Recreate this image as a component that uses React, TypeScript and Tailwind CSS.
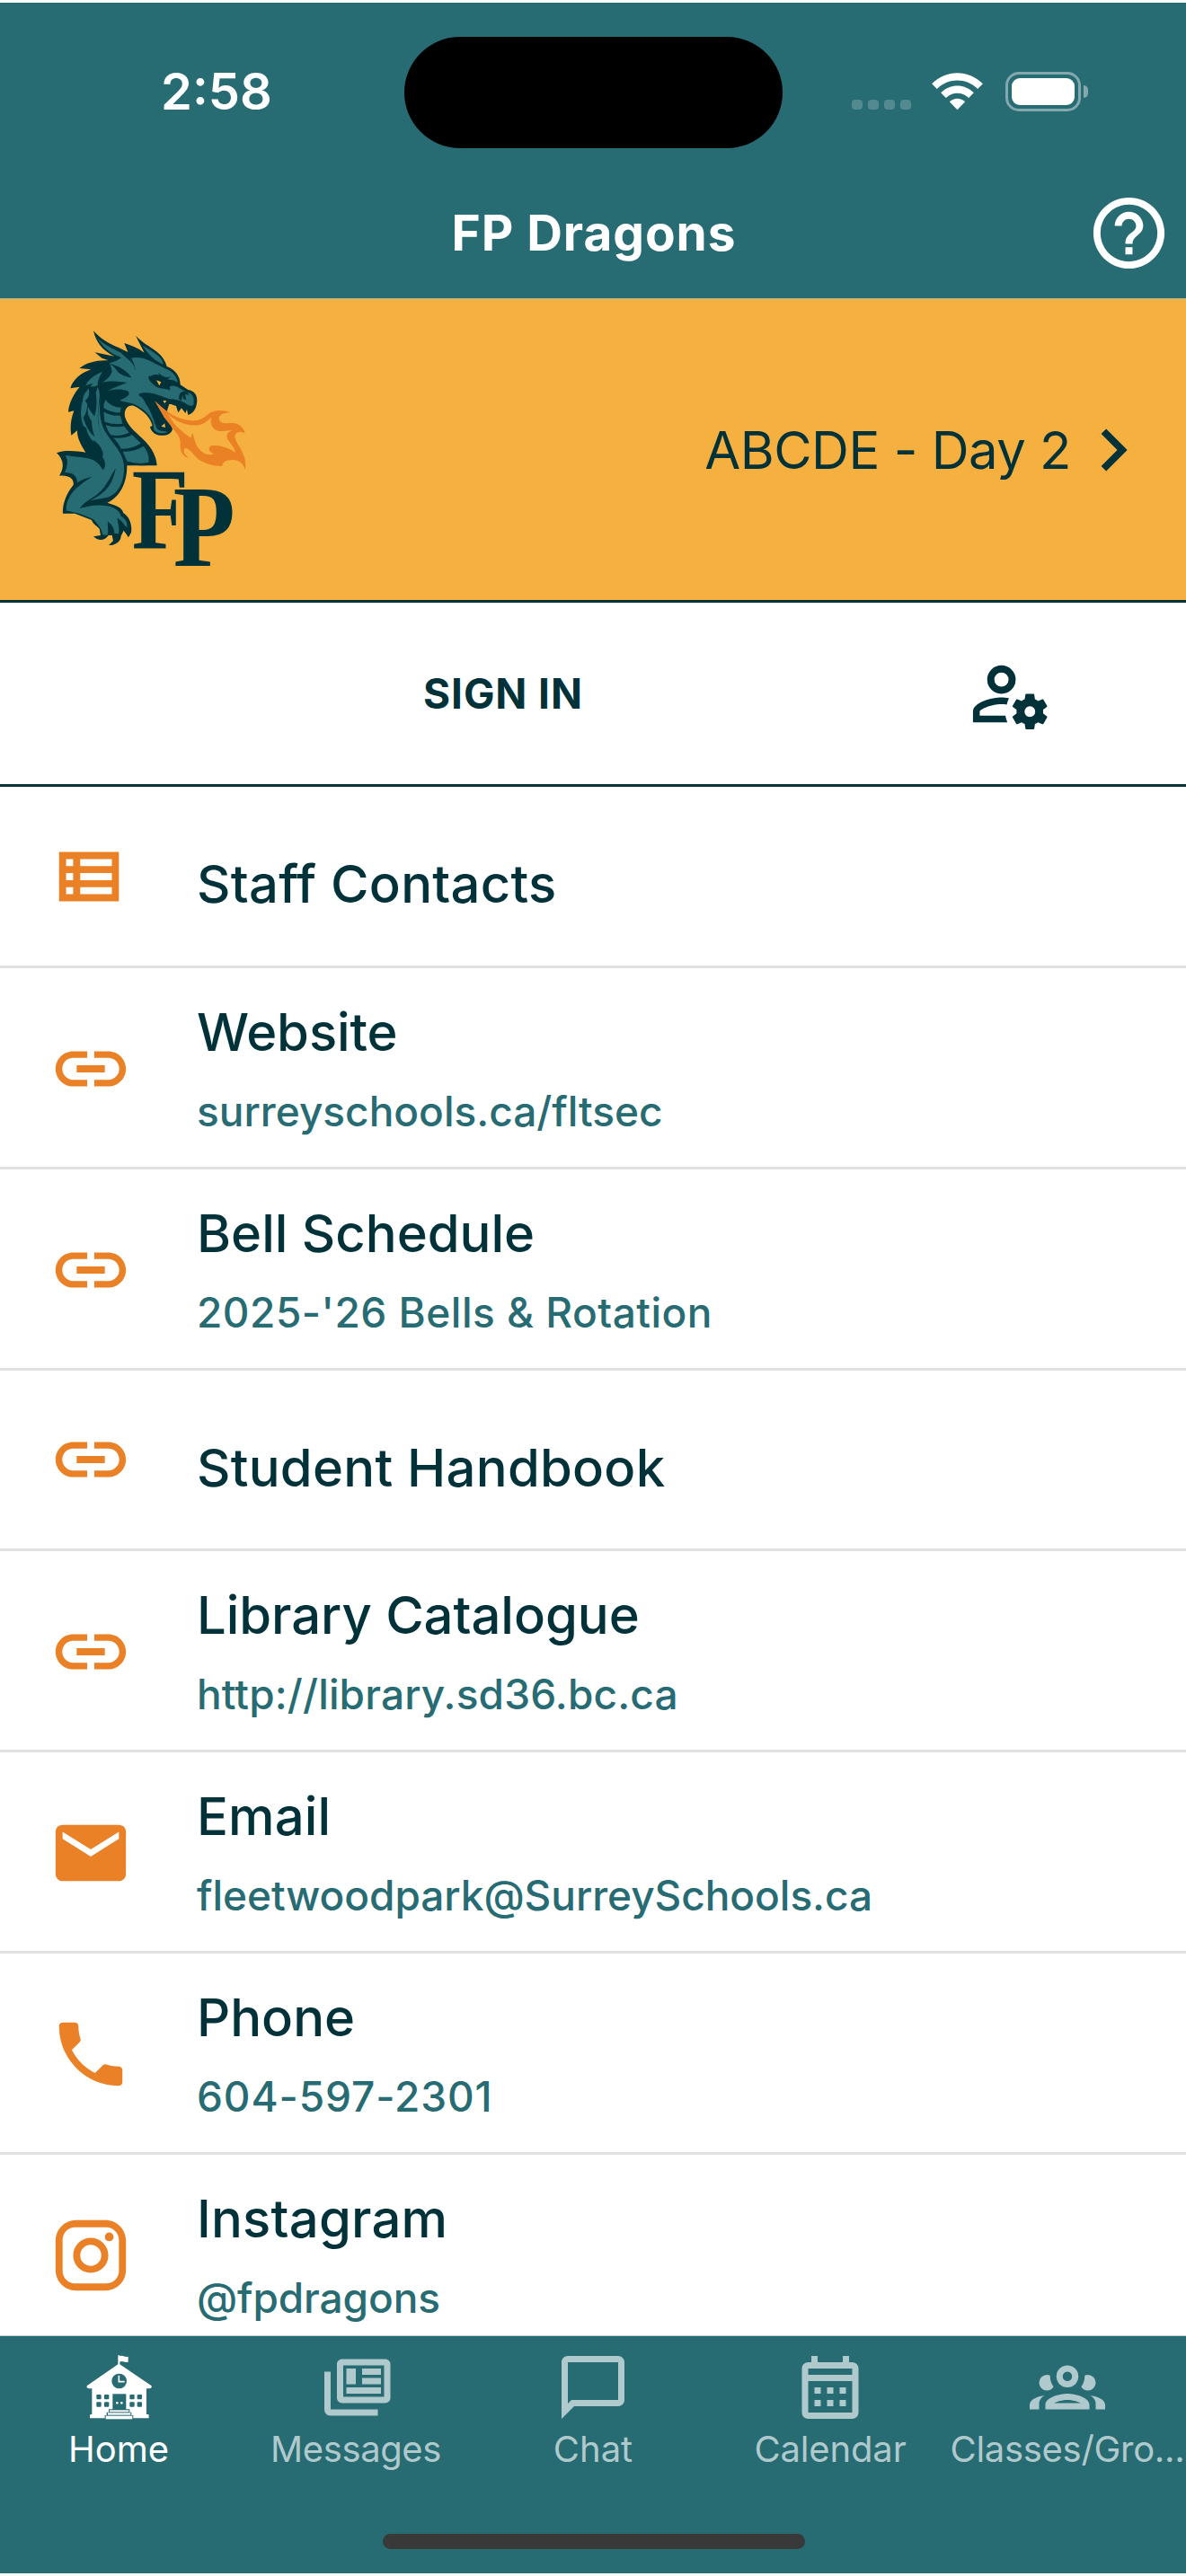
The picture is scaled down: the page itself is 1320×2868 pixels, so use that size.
import type { ReactNode } from "react";
import { MdChevronRight, MdEmail, MdHelpOutline, MdLink, MdPhone } from "react-icons/md";

function Glyph({ d, className }: { d: string; className: string }) {
  return (
    <svg viewBox="0 0 24 24" fill="currentColor" fillRule="evenodd" className={className} aria-hidden>
      <path d={d} />
    </svg>
  );
}

const paths = {
  list: "M3,5v14h17V5H3z M7,7v2H5V7H7z M5,13v-2h2v2H5z M5,15h2v2H5V15z M18,17H9v-2h9V17z M18,13H9v-2h9V13z M18,9H9V7h9V9z",
  instagram:
    "M7.8,2H16.2C19.4,2 22,4.6 22,7.8V16.2A5.8,5.8 0 0,1 16.2,22H7.8C4.6,22 2,19.4 2,16.2V7.8A5.8,5.8 0 0,1 7.8,2M7.6,4A3.6,3.6 0 0,0 4,7.6V16.4C4,18.39 5.61,20 7.6,20H16.4A3.6,3.6 0 0,0 20,16.4V7.6C20,5.61 18.39,4 16.4,4H7.6M17.25,5.5A1.25,1.25 0 0,1 18.5,6.75A1.25,1.25 0 0,1 17.25,8A1.25,1.25 0 0,1 16,6.75A1.25,1.25 0 0,1 17.25,5.5M12,7A5,5 0 0,1 17,12A5,5 0 0,1 12,17A5,5 0 0,1 7,12A5,5 0 0,1 12,7M12,9A3,3 0 0,0 9,12A3,3 0 0,0 12,15A3,3 0 0,0 15,12A3,3 0 0,0 12,9Z",
  accountCog:
    "M10 4A4 4 0 0 0 6 8A4 4 0 0 0 10 12A4 4 0 0 0 14 8A4 4 0 0 0 10 4M10 6A2 2 0 0 1 12 8A2 2 0 0 1 10 10A2 2 0 0 1 8 8A2 2 0 0 1 10 6M17,12C16.87,12 16.76,12.09 16.74,12.21L16.55,13.53C16.25,13.66 15.96,13.82 15.7,14L14.46,13.5C14.35,13.5 14.22,13.5 14.15,13.63L13.15,15.36C13.09,15.47 13.11,15.6 13.21,15.68L14.27,16.5C14.25,16.67 14.24,16.83 14.24,17C14.24,17.17 14.25,17.33 14.27,17.5L13.21,18.32C13.12,18.4 13.09,18.53 13.15,18.64L14.15,20.37C14.21,20.5 14.34,20.5 14.46,20.5L15.7,20C15.96,20.18 16.24,20.35 16.55,20.47L16.74,21.79C16.76,21.91 16.86,22 17,22H19C19.11,22 19.22,21.91 19.24,21.79L19.43,20.47C19.73,20.34 20,20.18 20.27,20L21.5,20.5C21.63,20.5 21.76,20.5 21.83,20.37L22.83,18.64C22.89,18.53 22.86,18.4 22.77,18.32L21.7,17.5C21.72,17.33 21.74,17.17 21.74,17C21.74,16.83 21.73,16.67 21.7,16.5L22.76,15.68C22.85,15.6 22.88,15.47 22.82,15.36L21.82,13.63C21.76,13.5 21.63,13.5 21.5,13.5L20.27,14C20,13.82 19.73,13.65 19.42,13.53L19.23,12.21C19.22,12.09 19.11,12 19,12H17M18,15.5A1.5,1.5 0 0,1 19.5,17A1.5,1.5 0 0,1 18,18.5C17.16,18.5 16.5,17.83 16.5,17A1.5,1.5 0 0,1 18,15.5M10,13C7.33,13 2,14.33 2,17V20H11.67C11.41,19.4 11.23,18.77 11.12,18.1H3.9V17C3.9,16.36 7.03,14.9 10,14.9C10.5,14.9 11,14.95 11.5,15C11.63,14.4 11.84,13.75 12.12,13.2C11.3,13.07 10.6,13 10,13",
  news: "M4 7V19H19V21H4C2 21 2 19 2 19V7H4M21 5V15H8V5H21M21.3 3H7.7C6.76 3 6 3.7 6 4.55V15.45C6 16.31 6.76 17 7.7 17H21.3C22.24 17 23 16.31 23 15.45V4.55C23 3.7 22.24 3 21.3 3M9 6H12V11H9V6M20 14H9V12H20V14M20 8H14V6H20V8M20 11H14V9H20V11Z",
  chat: "M20 2H4C2.9 2 2 2.9 2 4V22L6 18H20C21.1 18 22 17.1 22 16V4C22 2.9 21.1 2 20 2M20 16H5.17L4 17.17V4H20V16Z",
  calendar:
    "M7 12h2v2H7v-2M21 6v14c0 1.1-.9 2-2 2H5c-1.1 0-2-.9-2-2V6c0-1.1.9-2 2-2h1V2h2v2h8V2h2v2h1c1.1 0 2 .9 2 2M5 8h14V6H5v2m14 12V10H5v10h14m-4-6v-2h2v2h-2m-4 0v-2h2v2h-2m-4 2h2v2H7v-2m8 2v-2h2v2h-2m-4 0v-2h2v2h-2",
  groups:
    "M12,5A3.5,3.5 0 0,0 8.5,8.5A3.5,3.5 0 0,0 12,12A3.5,3.5 0 0,0 15.5,8.5A3.5,3.5 0 0,0 12,5M12,7A1.5,1.5 0 0,1 13.5,8.5A1.5,1.5 0 0,1 12,10A1.5,1.5 0 0,1 10.5,8.5A1.5,1.5 0 0,1 12,7M5.5,8A2.5,2.5 0 0,0 3,10.5C3,11.44 3.53,12.25 4.29,12.68C4.65,12.88 5.06,13 5.5,13C5.94,13 6.35,12.88 6.71,12.68C7.08,12.47 7.39,12.17 7.62,11.81C6.89,10.86 6.5,9.7 6.5,8.5C6.5,8.41 6.5,8.31 6.5,8.22C6.2,8.08 5.86,8 5.5,8M18.5,8C18.14,8 17.8,8.08 17.5,8.22C17.5,8.31 17.5,8.41 17.5,8.5C17.5,9.7 17.11,10.86 16.38,11.81C16.5,12 16.63,12.15 16.78,12.3C16.94,12.45 17.1,12.58 17.29,12.68C17.65,12.88 18.06,13 18.5,13C18.94,13 19.35,12.88 19.71,12.68C20.47,12.25 21,11.44 21,10.5A2.5,2.5 0 0,0 18.5,8M12,14C9.66,14 5,15.17 5,17.5V19H19V17.5C19,15.17 14.34,14 12,14M4.71,14.55C2.78,14.78 0,15.76 0,17.5V19H3V17.07C3,16.06 3.69,15.22 4.71,14.55M19.29,14.55C20.31,15.22 21,16.06 21,17.07V19H24V17.5C24,15.76 21.22,14.78 19.29,14.55M12,16C13.53,16 15.24,16.5 16.23,17H7.77C8.76,16.5 10.47,16 12,16Z",
};

function WifiIcon() {
  return (
    <svg viewBox="0 0 170 126" fill="none" className="h-[42px] w-[57px]" aria-hidden>
      <path d="M0 37C48 -11 122 -11 170 37L153 54C114 16 56 16 17 54Z" fill="white" />
      <path d="M30 67C62 36 108 36 140 67L123 84C101 63 69 63 47 84Z" fill="white" />
      <path d="M59 97C74 83 96 83 111 97L85 124Z" fill="white" />
    </svg>
  );
}

function Battery() {
  return (
    <div className="flex items-center gap-[3px]">
      <div className="h-[44px] w-[84px] rounded-[15px] border-[3px] border-[#83a9ae] p-[4px]">
        <div className="h-full w-full rounded-[9px] bg-white" />
      </div>
      <div className="h-[14px] w-[5px] rounded-r-full bg-[#83a9ae]" />
    </div>
  );
}

function SchoolIcon() {
  return (
    <svg viewBox="30 63 252 252" className="h-[84px] w-[84px]" aria-hidden>
      <g fill="white">
        <path d="M154 82H160V85C170 79 178 91 188 86V104C178 109 170 98 160 104V112L266 184V190L260 193H249V279H254Q257 279 257 283V292H60V283Q60 279 64 279H67V193H56L50 190V184L154 112Z" />
      </g>
      <g fill="#276b73">
        <circle cx="158" cy="168" r="25" />
        <rect x="136" y="211" width="45" height="54" />
        <rect x="82" y="213" width="16" height="16" rx="3" />
        <rect x="108" y="213" width="16" height="16" rx="3" />
        <rect x="193" y="213" width="16" height="16" rx="3" />
        <rect x="218" y="213" width="16" height="16" rx="3" />
        <rect x="82" y="238" width="16" height="16" rx="3" />
        <rect x="108" y="238" width="16" height="16" rx="3" />
        <rect x="193" y="238" width="16" height="16" rx="3" />
        <rect x="218" y="238" width="16" height="16" rx="3" />
        <path d="M123 262H193V272H199V282H205V297H110V282H116V272H123Z" />
      </g>
      <path d="M157 149V170H176" stroke="white" strokeWidth="5" fill="none" />
      <g fill="white">
        <circle cx="151" cy="241" r="4" />
        <circle cx="166" cy="241" r="4" />
        <rect x="126" y="265" width="64" height="6" />
        <rect x="120" y="274" width="76" height="7" />
        <rect x="113" y="284" width="89" height="11" />
      </g>
    </svg>
  );
}

function DragonLogo() {
  return (
    <svg viewBox="0 0 780 900" className="h-[300px] w-[260px] overflow-visible" role="img" aria-label="FP Dragons">
      {/* outline */}
      <path
        fill="#01323a"
        d="M192 55C214 80 242 98 276 111L307 126L295 96C318 103 340 112 362 128L333 71C352 92 378 106 400 122C421 137 432 155 437 174C462 183 482 204 482 235L508 252C532 256 541 274 537 297C534 317 524 332 508 336L504 318L499 330L486 313L475 328L468 306L445 298L438 322L445 360L456 383C451 404 425 408 404 402C391 397 383 387 381 376L389 372C383 345 360 322 328 306C307 300 293 318 297 342C308 378 338 396 366 425C387 447 402 474 404 505H304C305 555 284 610 238 629C262 638 288 642 292 664C310 674 322 700 318 728L309 745L303 736L293 722L284 740C284 758 266 772 243 771L258 756L254 738L242 738C230 756 208 758 192 742L216 738L212 716C202 706 190 700 186 687L130 665H90C88 640 98 602 125 570C128 550 112 536 78 539C94 514 95 486 69 463C96 451 136 457 166 461C150 436 137 412 138 388L118 404C113 376 117 348 127 322L108 326C110 296 126 266 146 242L115 247C123 218 150 196 184 184L145 180C170 160 205 152 242 154L220 146L197 127L262 140C222 122 200 92 192 55Z"
      />
      {/* horns, head, neck and arm */}
      <g fill="#276b73">
        <path d="M204 78C222 98 250 112 284 128C298 146 318 150 334 184C318 164 296 148 270 138C240 124 220 104 204 78Z" />
        <path d="M356 104C376 116 398 128 412 142C420 150 424 158 425 168L398 152C382 140 368 122 356 104Z" />
        <path d="M246 162C262 158 276 152 290 140L318 160L334 188C330 172 326 158 318 146C350 140 370 150 398 164L438 184C458 192 470 208 474 228C458 214 444 222 430 212C414 200 396 198 384 206C368 206 378 222 394 236C412 252 430 244 448 254C440 236 456 236 472 242L504 260C526 264 530 282 526 302C518 308 510 306 500 298C484 286 464 284 444 282C420 276 402 264 376 262C352 260 330 266 352 276C366 290 366 306 384 316C402 330 408 352 402 378L412 388L440 392C428 400 404 398 394 386L392 366C386 340 364 318 328 300C308 292 288 294 280 286C300 280 320 268 306 256C284 248 262 250 240 256C260 244 284 236 304 228C280 224 250 220 220 228C238 218 250 206 254 190Z" />
        <path d="M222 192C200 200 176 214 166 238L190 230C176 252 156 262 156 290C150 310 146 340 158 372L168 380C174 410 190 424 208 440L222 478C230 486 234 500 228 520L240 500C240 452 236 436 222 408C208 378 204 350 208 318C210 286 218 262 206 244C204 224 212 208 222 192Z" />
        <path d="M222 268C206 300 212 362 234 396C262 440 292 462 294 510C296 556 276 602 236 612L180 622C216 606 256 580 266 514C244 548 236 576 206 600C186 616 164 624 146 648C176 640 206 634 236 640C262 644 280 656 284 674C300 684 306 694 304 712C294 704 290 690 272 680C272 696 280 710 276 732L262 732C262 712 252 700 240 692C238 708 244 722 238 738L222 736C220 714 206 702 194 686C170 672 132 660 102 656C98 634 110 604 136 580C150 566 166 556 188 542C168 546 152 552 138 562C138 542 126 528 96 528C106 506 108 488 98 470C130 476 166 476 190 486C206 494 214 504 224 520C246 496 236 440 222 410C206 376 200 320 222 268Z" />
      </g>
      {/* belly plates */}
      <g fill="#276b73" stroke="#01323a" strokeWidth="7">
        <path d="M232 278C242 296 262 308 288 308L284 332C256 332 236 324 222 314C222 300 226 288 232 278Z" />
        <path d="M222 318C244 334 264 336 284 334L294 368C270 372 248 370 226 362Z" />
        <path d="M228 364C254 374 276 374 296 370L316 396C294 408 268 410 248 406C238 394 232 380 228 364Z" />
        <path d="M250 408C282 412 304 408 322 398L356 432C330 448 304 454 282 452C276 438 264 422 250 408Z" />
        <path d="M284 454C314 458 338 450 360 436C378 458 384 478 378 498C346 506 322 500 302 494Z" />
      </g>
      {/* scales, brow, jaw and nostril shading */}
      <g fill="#01323a">
        <path d="M246 164C272 172 300 182 320 212C300 208 282 202 272 190C266 180 258 172 246 164Z" />
        <path d="M172 236C186 244 196 242 208 236L200 262C204 290 204 310 196 340C188 332 180 320 174 308C170 330 176 342 186 356C186 374 190 390 196 408C180 396 166 372 158 344C166 336 170 320 172 300L164 288C176 280 184 262 172 236Z" />
        <path d="M190 420C206 428 216 440 224 462L222 484C210 474 196 464 188 452L204 456Z" />
        <path d="M376 206C400 206 424 222 450 250L416 244C398 240 386 226 376 206Z" />
        <path d="M362 266C380 284 388 314 406 338C414 356 412 370 408 386L396 364C390 330 368 310 362 266Z" />
        <path d="M408 194C424 210 440 214 450 206C440 224 418 218 408 194Z" />
        <path d="M478 284C474 256 500 248 512 270L498 266L502 286L492 282L490 268L486 288Z" />
        <path d="M396 290L442 284L476 300L444 300L436 322L450 366L436 388L414 386C416 350 408 320 396 290Z" />
      </g>
      <path d="M402 220L418 226L412 238ZM424 288L430 298L436 288ZM418 374L430 364L432 378Z" fill="#f6b03f" />
      {/* flame */}
      <path
        fill="#ea8125"
        d="M396 288C424 314 456 344 500 352C542 362 560 346 574 334C594 318 624 318 648 328C626 328 608 338 612 352C620 372 642 360 662 364C682 368 694 380 698 397C680 388 664 394 664 410C672 440 706 466 699 520C694 500 680 488 660 486C634 486 622 494 622 507C590 508 548 494 532 474C516 456 506 444 496 448C490 462 500 472 512 480C492 476 480 460 482 434C484 408 470 398 452 374L428 344Z"
      />
      <path
        fill="#f6b03f"
        d="M440 334C470 360 512 378 550 368C568 362 578 350 586 344C580 366 590 386 612 390C628 392 638 386 654 388C640 394 632 404 642 420C656 440 664 446 666 462C646 446 616 436 588 438C576 440 570 454 594 466C574 474 554 462 542 446C528 428 530 410 522 396L518 412C504 404 478 384 462 366Z"
      />
      {/* monogram */}
      <g fill="#01323a" fontFamily="'Liberation Serif', serif" fontWeight="700" fontSize="388">
        <text x="320" y="779" textLength="190" lengthAdjust="spacingAndGlyphs">F</text>
        <text x="458" y="841" textLength="207" lengthAdjust="spacingAndGlyphs" stroke="#f6b03f" strokeWidth="14" paintOrder="stroke">P</text>
      </g>
    </svg>
  );
}

type Row = { icon: ReactNode; title: string; titleTrack: string; sub?: string; subTrack?: string; height: string };

const iconSize = "h-[94px] w-[94px]";

const rows: Row[] = [
  { icon: <Glyph d={paths.list} className={iconSize} />, title: "Staff Contacts", titleTrack: "tracking-[0.25px]", height: "h-[202px]" },
  { icon: <MdLink className={iconSize} />, title: "Website", titleTrack: "tracking-[-0.1px]", sub: "surreyschools.ca/fltsec", subTrack: "tracking-[0px]", height: "h-[224px]" },
  { icon: <MdLink className={iconSize} />, title: "Bell Schedule", titleTrack: "tracking-[0px]", sub: "2025-'26 Bells & Rotation", subTrack: "tracking-[0.5px]", height: "h-[224px]" },
  { icon: <MdLink className={iconSize} />, title: "Student Handbook", titleTrack: "tracking-[0.25px]", height: "h-[201px]" },
  { icon: <MdLink className={iconSize} />, title: "Library Catalogue", titleTrack: "tracking-[-0.05px]", sub: "http://library.sd36.bc.ca", subTrack: "tracking-[0.15px]", height: "h-[224px]" },
  { icon: <MdEmail className={iconSize} />, title: "Email", titleTrack: "tracking-[0.1px]", sub: "fleetwoodpark@SurreySchools.ca", subTrack: "tracking-[-0.05px]", height: "h-[224px]" },
  { icon: <MdPhone className={iconSize} />, title: "Phone", titleTrack: "tracking-[0px]", sub: "604-597-2301", subTrack: "tracking-[0.9px]", height: "h-[224px]" },
  { icon: <Glyph d={paths.instagram} className={iconSize} />, title: "Instagram", titleTrack: "tracking-[0.2px]", sub: "@fpdragons", subTrack: "tracking-[-0.1px]", height: "h-[224px]" },
];

function ListRow({ row }: { row: Row }) {
  return (
    <li className={`flex shrink-0 items-center border-b-[3px] border-[#e1e1e1] pl-[54px] ${row.height}`}>
      <div className={`shrink-0 text-[#ea8127] ${row.sub ? "pt-[2px]" : ""}`}>{row.icon}</div>
      {row.sub ? (
        <div className="flex h-full flex-col gap-[16px] pt-[31px] pl-[71px]">
          <div className={`text-[58px] leading-[80px] font-medium text-[#01323a] ${row.titleTrack}`}>{row.title}</div>
          <div className={`text-[46px] leading-[64px] font-medium text-[#276b73] ${row.subTrack}`}>{row.sub}</div>
        </div>
      ) : (
        <div className={`pt-[17px] pl-[71px] text-[58px] leading-[80px] font-medium text-[#01323a] ${row.titleTrack}`}>{row.title}</div>
      )}
    </li>
  );
}

const tabSize = "h-[84px] w-[84px]";

const tabs: { icon: ReactNode; label: string; tone: string }[] = [
  { icon: <SchoolIcon />, label: "Home", tone: "text-white" },
  { icon: <Glyph d={paths.news} className={tabSize} />, label: "Messages", tone: "text-[#b0c9cc] tracking-[-0.4px]" },
  { icon: <Glyph d={paths.chat} className={tabSize} />, label: "Chat", tone: "text-[#b0c9cc]" },
  { icon: <Glyph d={paths.calendar} className={tabSize} />, label: "Calendar", tone: "text-[#b0c9cc] tracking-[-0.15px]" },
  { icon: <Glyph d={paths.groups} className={tabSize} />, label: "Classes/Gro...", tone: "text-[#b0c9cc] tracking-[-0.3px]" },
];

export default function App() {
  return (
    <div className="flex h-[2868px] w-[1320px] flex-col overflow-hidden bg-white py-[3px] font-[Inter,sans-serif]">
      <header className="h-[330px] shrink-0 border-b border-[#a9b9a0] bg-[#276b73] text-white">
        <div className="grid h-[197px] grid-cols-[450px_421px_449px] items-center">
          <div className="pl-[179px] text-[56px] leading-[64px] font-semibold">2:58</div>
          <div className="mt-[3px] h-[124px] rounded-full bg-black" />
          <div className="flex items-center pl-[77px]">
            <div className="mt-[30px] flex gap-[6px]">
              <span className="h-[11px] w-[12px] rounded-[4px] bg-[#548990]" />
              <span className="h-[11px] w-[12px] rounded-[4px] bg-[#548990]" />
              <span className="h-[11px] w-[12px] rounded-[4px] bg-[#548990]" />
              <span className="h-[11px] w-[12px] rounded-[4px] bg-[#548990]" />
            </div>
            <div className="pr-[25px] pl-[23px]">
              <WifiIcon />
            </div>
            <Battery />
          </div>
        </div>
        <div className="grid h-[118px] grid-cols-[1fr_auto_1fr] items-center pr-[16px] pl-[18px]">
          <span />
          <h1 className="text-[55px] leading-[70px] font-bold tracking-[0.9px]">FP Dragons</h1>
          <MdHelpOutline className="h-[95px] w-[95px] justify-self-end" />
        </div>
      </header>

      <section className="flex h-[338px] shrink-0 items-center justify-between border-b-[3px] border-[#01323a] bg-[#f6b03f] pr-[34px] pb-[2px] pl-[40px]">
        <DragonLogo />
        <div className="flex items-center pt-[2px] text-[#01323a]">
          <span className="text-[58px] leading-[80px] tracking-[-0.5px]">ABCDE - Day 2</span>
          <MdChevronRight className="h-[94px] w-[94px]" />
        </div>
      </section>

      <section className="flex h-[205px] shrink-0 items-center border-b-[3px] border-[#01323a] text-[#01323a]">
        <div className="w-[1075px] pl-[45px] text-center text-[46px] leading-[64px] font-bold tracking-[0.9px]">SIGN IN</div>
        <Glyph d={paths.accountCog} className="h-[95px] w-[95px]" />
      </section>

      <ul className="flex min-h-0 flex-1 flex-col overflow-hidden">
        {rows.map((row) => (
          <ListRow key={row.title} row={row} />
        ))}
      </ul>

      <footer className="flex h-[265px] shrink-0 flex-col items-center border-t border-[#c8cccc] bg-[#276b73]">
        <nav className="grid w-full grid-cols-5 pt-[15px]">
          {tabs.map((tab) => (
            <div key={tab.label} className={`flex flex-col items-center text-[40px] leading-[48px] whitespace-nowrap ${tab.tone}`}>
              {tab.icon}
              <span className="pt-[3px]">{tab.label}</span>
            </div>
          ))}
        </nav>
        <div className="mt-[70px] ml-[2px] h-[17px] w-[470px] rounded-full bg-[#393939]" />
      </footer>
    </div>
  );
}
